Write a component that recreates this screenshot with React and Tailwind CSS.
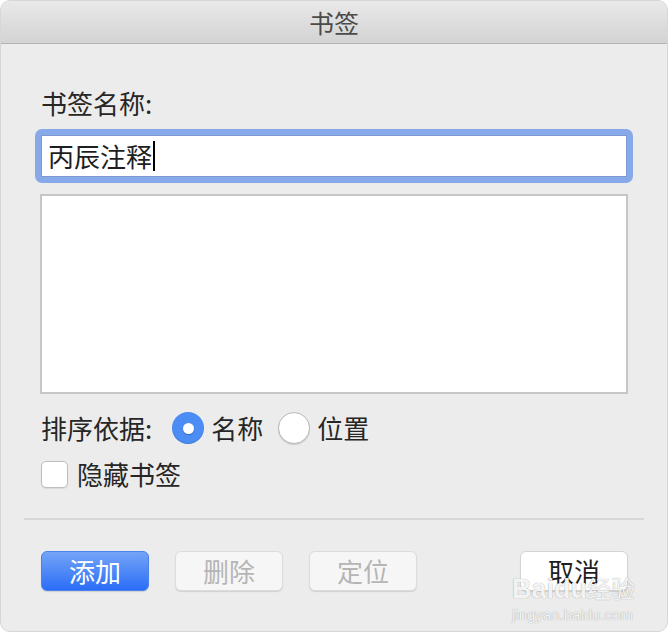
import React from 'react';

const font = { fontFamily: '"Noto Sans CJK SC", "Noto Sans", sans-serif' };

function Radio({ checked }) {
  return checked ? (
    <div className="flex h-[32px] w-[32px] shrink-0 items-center justify-center rounded-full bg-[#4b8cf5] shadow-[inset_0_-1px_1px_rgba(0,0,0,0.12)]">
      <div className="h-[11px] w-[11px] rounded-full bg-white shadow-[0_1px_1px_rgba(0,0,0,0.25)]" />
    </div>
  ) : (
    <div className="h-[32px] w-[32px] shrink-0 rounded-full border border-[#b9b9b9] bg-white shadow-[0_1px_1px_rgba(0,0,0,0.15)]" />
  );
}

function Button({ children, variant }) {
  const styles = {
    primary:
      'bg-gradient-to-b from-[#74a4f7] to-[#2a6cf6] text-white border border-[#4a82ee]',
    disabled: 'bg-[#f6f6f6] text-[#b5b5b5] border border-[#dcdcdc]',
    normal: 'bg-white text-[#1f1f1f] border border-[#d4d4d4]',
  };
  return (
    <div
      className={`flex h-[40px] w-[108px] items-center justify-center rounded-[6px] text-[26px] leading-none shadow-[0_1px_1px_rgba(0,0,0,0.12)] ${styles[variant]}`}
    >
      {children}
    </div>
  );
}

export default function App() {
  return (
    <div className="h-[632px] w-[668px] bg-white" style={font}>
      <div className="relative flex h-full w-full flex-col overflow-hidden rounded-[10px] border border-[#d6d6d6] bg-[#ececec]">
        {/* title bar */}
        <div className="flex h-[43px] shrink-0 items-center justify-center border-b border-[#b3b3b3] bg-gradient-to-b from-[#e9e9e9] to-[#d3d3d3] text-[25px] leading-none text-[#4b4b4b]">
          书签
        </div>

        <div className="flex flex-col px-[39px]">
          <div className="mt-[43px] h-[32px] pl-[1px] text-[26px] leading-[32px] text-[#262626]">
            书签名称:
          </div>

          {/* focused text field */}
          <div className="-mx-[5px] mt-[10px] rounded-[7px] bg-[#87a9ea] p-[6px]">
            <div className="flex h-[42px] items-center border border-[#7f9ad0] bg-white pl-[6px] text-[26px] leading-none text-[#1e1e1e]">
              丙辰注释
              <span className="ml-[1px] h-[30px] w-[2px] bg-black" />
            </div>
          </div>

          {/* list */}
          <div className="mt-[11px] h-[200px] border-2 border-[#c6c6c6] bg-white" />

          {/* sort by */}
          <div className="mt-[17px] flex h-[34px] items-center pl-[1px] text-[26px] leading-none text-[#262626]">
            <span>排序依据:</span>
            <div className="ml-[20px]">
              <Radio checked />
            </div>
            <span className="ml-[7px]">名称</span>
            <div className="ml-[15px]">
              <Radio />
            </div>
            <span className="ml-[7px]">位置</span>
          </div>

          {/* hide bookmarks */}
          <div className="mt-[15px] flex h-[28px] items-center pl-[1px] text-[26px] leading-none text-[#262626]">
            <div className="h-[27px] w-[27px] rounded-[5px] border border-[#bdbdbd] bg-white shadow-[0_1px_1px_rgba(0,0,0,0.08)]" />
            <span className="ml-[9px]">隐藏书签</span>
          </div>

          <div className="-mx-[16px] mt-[30px] h-[2px] bg-[#d7d7d7]" />

          <div className="mt-[31px] flex items-center gap-[26px] pl-[1px]">
            <Button variant="primary">添加</Button>
            <Button variant="disabled">删除</Button>
            <Button variant="disabled">定位</Button>
            <div className="ml-auto">
              <Button variant="normal">取消</Button>
            </div>
          </div>
        </div>

        {/* watermark */}
        <div className="pointer-events-none absolute left-[511px] top-[575px] flex flex-col items-start text-white/90 [text-shadow:0_0_1px_rgba(0,0,0,0.45)]">
          <span
            className="text-[27px] font-bold leading-none"
            style={{ fontFamily: '"Liberation Sans", "Noto Sans CJK SC", sans-serif' }}
          >
            Baidu<span className="text-[24px] font-normal" style={font}>经验</span>
          </span>
          <span
            className="mt-[4px] text-[15px] leading-none"
            style={{ fontFamily: '"Liberation Sans", sans-serif' }}
          >
            jingyan.baidu.com
          </span>
        </div>
      </div>
    </div>
  );
}
